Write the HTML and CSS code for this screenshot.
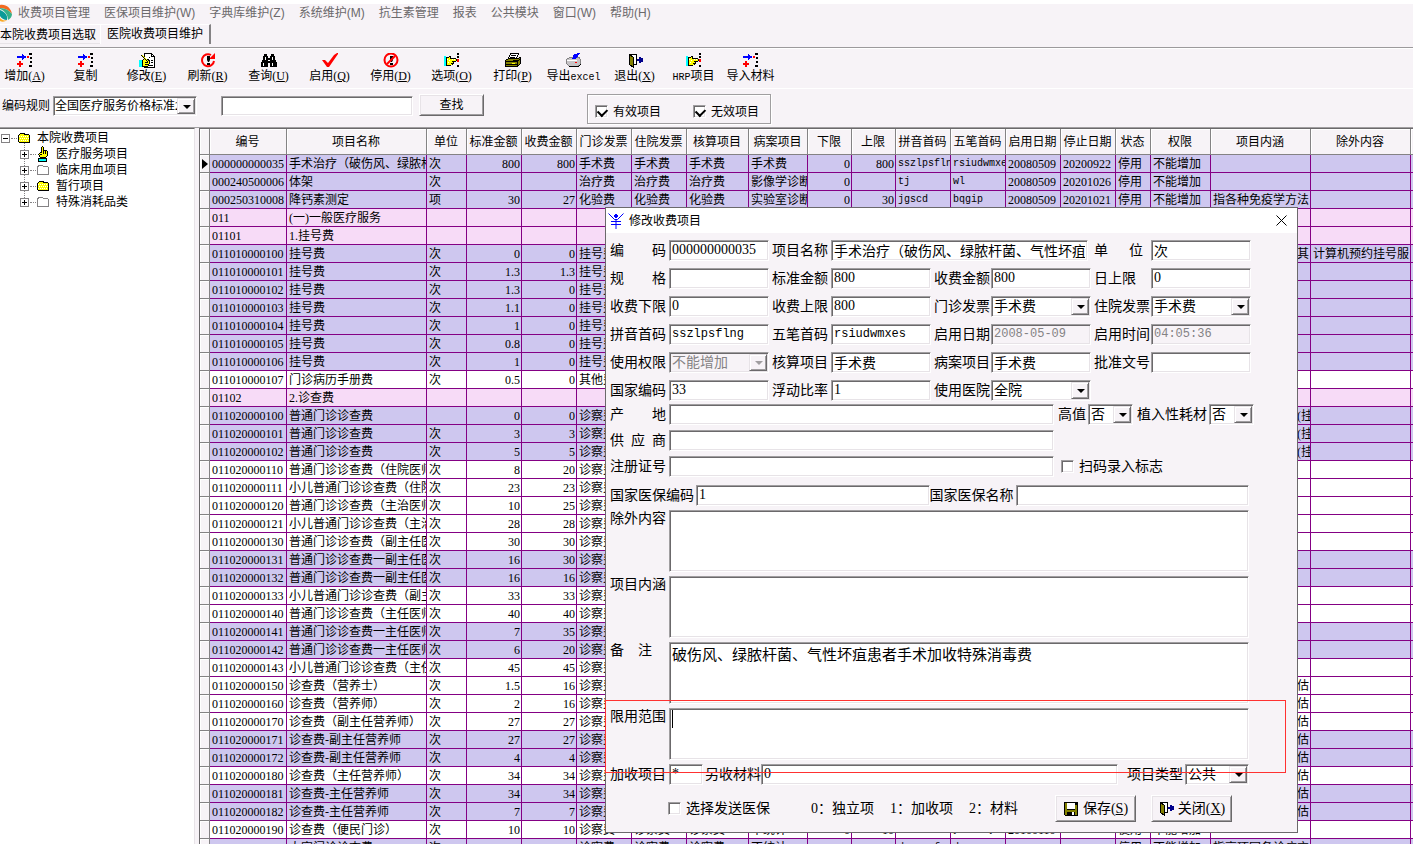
FILE: index.html
```html
<!DOCTYPE html>
<html lang="zh-CN">
<head>
    <meta charset="UTF-8">
    <meta name="viewport" content="width=device-width, initial-scale=1.0">
    <title>收费项目管理</title>
    <link rel="stylesheet" href="styles.css">
</head>
<body>
    <!-- shared icons -->
    <svg class="icon-defs" aria-hidden="true">
        <symbol id="i-add" viewBox="0 0 16 16">
            <path fill="#00f" d="M0 3h5V1h1v1h1v1h2v2H7v1H6v1H5V5H0z"/>
            <path fill="#f00" d="M2 8h2v2h2v2H4v2H2v-2H0v-2h2zM10 3h2v2h-2z"/>
            <path d="M12 0h3v2h-3zM13 4h2v2h-2zM13 8h2v2h-2zM12 12h3v2h-3z"/>
        </symbol>
        <symbol id="i-edit" viewBox="0 0 16 16">
            <path fill="#fff" stroke="#000" d="M5.500.500h7l3 3v11h-10z"/>
            <path fill="none" stroke="#000" d="M12.500.500v3h3M12 7.500h2M12 9.500h2M9 12.500h5M10 4.500h1"/>
            <path fill="#ff0" stroke="#000" d="M3.500 7.500l2-2 3 1 2 1v3l-2 3h-5z"/>
            <path stroke="#000" d="M2 2l7 7M6 9.500h3M6 11.500h3"/>
            <path stroke="#ff0" d="M3 2l5 5"/>
            <path fill="#0ff" d="M0 7h3v7H0z"/>
        </symbol>
        <symbol id="i-refresh" viewBox="0 0 16 16">
            <path fill="none" stroke="#f00" stroke-width="2" d="M11 2A6 6 0 1 0 14 8"/>
            <path fill="#f00" d="M15 0v6H9z"/>
            <path d="M7 3h3v4L9 9H8L7 7zM7 10h3v2H7z"/>
        </symbol>
        <symbol id="i-find" viewBox="0 0 16 16">
            <path d="M3 1h3v2h1v2h2V3h1V1h3v2h1v3l2 4v4H9v-4H7v4H0v-4l2-4V3h1z"/>
            <path fill="#fff" d="M4 4h1v3H4zM11 4h1v3h-1zM2 10h1v3H2zM11 10h1v3h-1zM7 7h2v1H7z"/>
        </symbol>
        <symbol id="i-check" viewBox="0 0 16 16">
            <path fill="#f00" d="M0 7h3l3 3 6-8 3-2h1v1l-9 13H5z"/>
        </symbol>
        <symbol id="i-stop" viewBox="0 0 16 16">
            <path d="M7 3h3v4L9 9H8L7 7zM7 10h3v2H7z"/>
            <circle cx="8" cy="7" r="6.500" fill="none" stroke="#f00" stroke-width="2"/>
            <path stroke="#f00" stroke-width="2" d="M12 3l-8 8"/>
        </symbol>
        <symbol id="i-hand" viewBox="0 0 16 16">
            <path fill="#0ff" d="M0 3h2v10H0z"/>
            <path d="M2 4h3V3h2v2h5v1h1v2h-1v1h-2v2H9v1H7v1H2z"/>
            <path fill="#ff0" d="M3 5h2V4h1v2h6v2H8v1h1v1H7v1h1v1H3z"/>
            <path fill="#fff" d="M3 6h1v1H3zM5 7h1v1H5zM4 9h1v1H4zM8 6h1v1H8zM10 6h1v1h-1z"/>
            <path d="M13 0h2v2h-2zM13 3h2v2h-2zM13 12h2v2h-2z"/>
            <path fill="#f00" d="M13 6h2v3h-2z"/>
        </symbol>
        <symbol id="i-print" viewBox="0 0 16 16">
            <path fill="#fff" stroke="#000" d="M5.500.500h8l-2 5h-8z"/>
            <path stroke="#000" d="M6 2.500h5M5 4.500h5"/>
            <path fill="#848200" stroke="#000" d="M.500 7.500l3-2h9l3-1v6l-3 3h-12z"/>
            <path stroke="#000" d="M1 8.500h11l3-2M1 11.500h11M12.500 8v5"/>
            <path stroke="#ff0" d="M7 10.500h3"/>
        </symbol>
        <symbol id="i-export" viewBox="0 0 16 16">
            <path fill="#c6c3c6" stroke="#848284" d="M.500 6.500l3-2h10l1 3v4l-3 2h-8l-3-3z"/>
            <path fill="none" stroke="#000" d="M3 13.500h9l3-2"/>
            <path fill="#00f" d="M8 1l6-1-4 6H6z"/>
            <path stroke="#fff" d="M1 7.500h10"/>
            <path stroke="#f00" d="M9 9.500h2"/>
        </symbol>
        <symbol id="i-exit" viewBox="0 0 16 16">
            <path fill="#fff" stroke="#000" d="M2.500 1.500h7v10h-7z"/>
            <path fill="#848200" stroke="#000" d="M2.500 1.500l4 3v10l-4-3z"/>
            <path fill="#00008b" d="M10 6h2V4h2v1h2v4h-2v1h-2V8h-2z"/>
        </symbol>
        <symbol id="i-save" viewBox="0 0 16 16">
            <path d="M1 1h14v14H2l-1-1z"/>
            <path fill="#848200" d="M2 2h2v7h8V4h2v10h-2v-3H4v3H2z"/>
            <path fill="#fff" d="M4 2h8v6H4zM9 11h2v3H9z"/>
        </symbol>
        <symbol id="i-folder" viewBox="0 0 12 12">
            <path d="M2 1h4l1 1h4v1h1v8H1v-1H0V3h1z"/>
            <path fill="#ff0" d="M2 2h4v1h5v7H1V3h1z"/>
            <path stroke="#fff" stroke-dasharray="1 1" d="M1 4.500h10M2 6.500h9M1 8.500h10"/>
        </symbol>
        <symbol id="i-folder-off" viewBox="0 0 12 12">
            <path fill="#fff" stroke="#848284" d="M.500 3.500l1-2h4l1 1h4l1 1v7H.500z"/>
        </symbol>
        <symbol id="i-point" viewBox="0 0 12 16">
            <path fill="#ff0" stroke="#000" d="M4.500 6.500v-5l1-1 1 1v3h3l1 1v4l-2 2h-5l-2-3 2-2z"/>
            <path stroke="#000" d="M6.500 4v4M8.500 5v3M3 8.500h2"/>
            <path fill="#0ff" stroke="#000" d="M1.500 12.500h8v3h-8z"/>
        </symbol>
    </svg>

    <nav class="menubar">
        <svg class="logo" viewBox="0 0 12 18" aria-hidden="true">
            <path fill="#f26a21" d="M0 1c6-1 11 3 12 9C9 6 5 4 0 4z"/>
            <path fill="#35b08a" d="M0 4c5 0 9 2 12 6 0 3-2 5-4 6 0-5-3-9-8-11z"/>
            <path fill="#0c9a98" d="M0 6c5 2 8 5 7 10-3 0-6-2-7-4z"/>
            <path fill="#f9a825" d="M0 14c2 2 4 3 7 2-2 2-5 2-7 1z"/>
        </svg>
        <a href="#">收费项目管理</a>
        <a href="#">医保项目维护(W)</a>
        <a href="#">字典库维护(Z)</a>
        <a href="#">系统维护(M)</a>
        <a href="#">抗生素管理</a>
        <a href="#">报表</a>
        <a href="#">公共模块</a>
        <a href="#">窗口(W)</a>
        <a href="#">帮助(H)</a>
    </nav>

    <div class="tabs">
        <button class="tab">本院收费项目选取</button>
        <button class="tab active">医院收费项目维护</button>
    </div>

    <div class="toolbar">
        <button class="tool"><svg><use href="#i-add"/></svg><span>增加(<u>A</u>)</span></button>
        <button class="tool"><svg><use href="#i-add"/></svg><span>复制</span></button>
        <button class="tool"><svg><use href="#i-edit"/></svg><span>修改(<u>E</u>)</span></button>
        <button class="tool"><svg class="smooth"><use href="#i-refresh"/></svg><span>刷新(<u>R</u>)</span></button>
        <button class="tool"><svg><use href="#i-find"/></svg><span>查询(<u>U</u>)</span></button>
        <button class="tool"><svg class="smooth"><use href="#i-check"/></svg><span>启用(<u>Q</u>)</span></button>
        <button class="tool"><svg class="smooth"><use href="#i-stop"/></svg><span>停用(<u>D</u>)</span></button>
        <button class="tool"><svg><use href="#i-hand"/></svg><span>选项(<u>O</u>)</span></button>
        <button class="tool"><svg><use href="#i-print"/></svg><span>打印(<u>P</u>)</span></button>
        <button class="tool"><svg><use href="#i-export"/></svg><span>导出<span class="mono">excel</span></span></button>
        <button class="tool"><svg><use href="#i-exit"/></svg><span>退出(<u>X</u>)</span></button>
        <button class="tool narrow"><svg><use href="#i-hand"/></svg><span><span class="mono">HRP</span>项目</span></button>
        <button class="tool narrow"><svg><use href="#i-add"/></svg><span>导入材料</span></button>
    </div>

    <div class="filter">
        <label for="rule">编码规则</label>
        <span class="select rule"><select id="rule"><option>全国医疗服务价格标准2012</option></select></span>
        <input class="keyword" type="text" aria-label="查找内容">
        <button class="btn find">查找</button>
        <div class="group">
            <label class="tick"><input type="checkbox" checked>有效项目</label>
            <label class="tick"><input type="checkbox" checked>无效项目</label>
        </div>
    </div>

    <div class="workspace">
        <ul class="tree">
            <li><span class="node root"><i class="box minus"></i><svg><use href="#i-folder"/></svg>本院收费项目</span>
                <ul>
                    <li class="node"><i class="box"></i><svg><use href="#i-point"/></svg>医疗服务项目</li>
                    <li class="node"><i class="box"></i><svg><use href="#i-folder-off"/></svg>临床用血项目</li>
                    <li class="node"><i class="box"></i><svg><use href="#i-folder"/></svg>暂行项目</li>
                    <li class="node"><i class="box"></i><svg><use href="#i-folder-off"/></svg>特殊消耗品类</li>
                </ul>
            </li>
        </ul>
        <div class="grid-wrap">
            <table class="grid">
                <colgroup>
                    <col class="w-mark"><col class="w-code"><col class="w-name"><col class="w-unit">
                    <col class="w-std"><col class="w-std"><col class="w-std"><col class="w-std">
                    <col class="w-calc"><col class="w-case"><col class="w-limit"><col class="w-limit">
                    <col class="w-std"><col class="w-std"><col class="w-std"><col class="w-std">
                    <col class="w-state"><col class="w-auth"><col class="w-long"><col class="w-long"><col class="w-long">
                </colgroup>
                <thead>
                    <tr>
                        <th></th><th>编号</th><th>项目名称</th><th>单位</th><th>标准金额</th><th>收费金额</th>
                        <th>门诊发票</th><th>住院发票</th><th>核算项目</th><th>病案项目</th><th>下限</th><th>上限</th>
                        <th>拼音首码</th><th>五笔首码</th><th>启用日期</th><th>停止日期</th><th>状态</th><th>权限</th>
                        <th>项目内涵</th><th>除外内容</th><th></th>
                    </tr>
                </thead>
                <tbody id="rows"></tbody>
            </table>
        </div>
    </div>

    <section class="dialog" role="dialog" aria-labelledby="dialog-title">
        <header class="titlebar">
            <svg viewBox="0 0 16 16" aria-hidden="true"><path fill="none" stroke="#00f" d="M.500.500l6 6h3l6-6M8 6v10M3 8.500h10M3 11.500h10"/><path fill="#00f" d="M7 1h2v1h1v2H9v1H7V4H6V2h1z"/></svg>
            <h1 id="dialog-title">修改收费项目</h1>
            <button class="close" aria-label="关闭窗口"><svg viewBox="0 0 11 11"><path stroke="#000" d="M.500.500l10 10M10.500.500l-10 10"/></svg></button>
        </header>
        <form class="form">
            <div class="fields">
                <label class="lead spread" for="f-code">编 码</label><input id="f-code" type="text" value="000000000035">
                <label for="f-name">项目名称</label><input class="wide" id="f-name" type="text" value="手术治疗（破伤风、绿脓杆菌、气性坏疽">
                <label class="spread unit" for="f-unit">单 位</label><input id="f-unit" type="text" value="次">

                <label class="lead spread" for="f-spec">规 格</label><input id="f-spec" type="text">
                <label for="f-std">标准金额</label><input id="f-std" type="text" value="800">
                <label for="f-fee">收费金额</label><input id="f-fee" type="text" value="800">
                <label for="f-day">日上限</label><input id="f-day" type="text" value="0">

                <label class="lead" for="f-low">收费下限</label><input id="f-low" type="text" value="0">
                <label for="f-high">收费上限</label><input id="f-high" type="text" value="800">
                <label for="f-out">门诊发票</label><span class="select"><select id="f-out"><option>手术费</option></select></span>
                <label for="f-in">住院发票</label><span class="select"><select id="f-in"><option>手术费</option></select></span>

                <label class="lead" for="f-py">拼音首码</label><input class="mono" id="f-py" type="text" value="sszlpsflng">
                <label for="f-wb">五笔首码</label><input class="mono" id="f-wb" type="text" value="rsiudwmxes">
                <label for="f-date">启用日期</label><input class="mono" id="f-date" type="text" value="2008-05-09" disabled>
                <label for="f-time">启用时间</label><input class="mono" id="f-time" type="text" value="04:05:36" disabled>

                <label class="lead" for="f-auth">使用权限</label><span class="select"><select id="f-auth" disabled><option>不能增加</option></select></span>
                <label for="f-calc">核算项目</label><input id="f-calc" type="text" value="手术费">
                <label for="f-case">病案项目</label><input id="f-case" type="text" value="手术费">
                <label for="f-doc">批准文号</label><input id="f-doc" type="text">

                <label class="lead" for="f-nat">国家编码</label><input id="f-nat" type="text" value="33">
                <label for="f-rate">浮动比率</label><input id="f-rate" type="text" value="1">
                <label for="f-hosp">使用医院</label><span class="select"><select id="f-hosp"><option>全院</option></select></span>
            </div>

            <div class="line">
                <label class="first spread" for="f-origin">产 地</label><input class="long" id="f-origin" type="text">
                <label class="after" for="f-dear">高值</label><span class="select yesno"><select id="f-dear"><option>否</option></select></span>
                <label class="after" for="f-implant">植入性耗材</label><span class="select yesno"><select id="f-implant"><option>否</option></select></span>
            </div>
            <div class="line">
                <label class="first spread" for="f-supplier">供 应 商</label><input class="long" id="f-supplier" type="text">
            </div>
            <div class="line">
                <label class="first" for="f-reg">注册证号</label><input class="long" id="f-reg" type="text">
                <label class="tick scan"><input type="checkbox">扫码录入标志</label>
            </div>
            <div class="line insurance">
                <label for="f-icode">国家医保编码</label><input id="f-icode" type="text" value="1">
                <label for="f-iname">国家医保名称</label><input id="f-iname" type="text">
            </div>

            <div class="notes">
                <label for="f-except">除外内容</label><textarea id="f-except"></textarea>
                <label for="f-content">项目内涵</label><textarea id="f-content"></textarea>
                <label class="spread short" for="f-remark">备 注</label><textarea id="f-remark">破伤风、绿脓杆菌、气性坏疽患者手术加收特殊消毒费</textarea>
                <label for="f-scope">限用范围</label><textarea class="low" id="f-scope"></textarea>
            </div>

            <div class="line extra">
                <label class="first" for="f-plus">加收项目</label><input class="tiny" id="f-plus" type="text" value="*">
                <label for="f-mat">另收材料</label><input class="grow" id="f-mat" type="text" value="0">
                <label class="kind" for="f-kind">项目类型</label><span class="select public"><select id="f-kind"><option>公共</option></select></span>
            </div>

            <div class="actions">
                <label class="tick"><input type="checkbox">选择发送医保</label>
                <p class="hints"><span>0：独立项</span><span>1：加收项</span><span>2：材料</span></p>
                <button class="btn" type="button"><svg><use href="#i-save"/></svg>保存(<u>S</u>)</button>
                <button class="btn" type="button"><svg><use href="#i-exit"/></svg>关闭(<u>X</u>)</button>
            </div>
        </form>
        <div class="marker"><i class="caret"></i></div>
    </section>

    <script src="script.js"></script>
</body>
</html>
```

FILE: styles.css
```css
* {
    box-sizing: border-box;
}

html, body {
    height: 100%;
    margin: 0;
}

body {
    display: flex;
    flex-direction: column;
    position: relative;
    overflow: hidden;
    border-top: 4px solid #fff;
    background-color: #f7f3f7;
    color: #000;
    font-family: "Liberation Serif", "Noto Sans CJK SC", sans-serif;
    font-size: 12px;
    line-height: 16px;
}

button, input, select, textarea {
    margin: 0;
    padding: 0;
    border: 0;
    outline: none;
    border-radius: 0;
    color: inherit;
    font: inherit;
}

svg {
    display: block;
    flex: none;
    shape-rendering: crispEdges;
}

svg.smooth {
    shape-rendering: auto;
}

.icon-defs {
    position: absolute;
    width: 0;
    height: 0;
}

.mono {
    font-family: "Liberation Mono", "Noto Sans CJK SC", monospace;
    font-size: 10px;
}

/* menu and tabs */
.menubar {
    display: flex;
    align-items: center;
    gap: 14px;
    height: 18px;
    font-family: "Liberation Sans", "Noto Sans CJK SC", sans-serif;
}

.menubar a {
    color: #6b696b;
    text-decoration: none;
    white-space: nowrap;
}

.logo {
    width: 12px;
    height: 18px;
    margin-right: -8px;
    shape-rendering: auto;
}

.tabs {
    display: flex;
    height: 26px;
    align-items: flex-start;
    border-bottom: 1px solid #9c9a9c;
    padding-top: 2px;
}

.tab {
    height: 20px;
    padding: 2px 4px 0 0;
    background-color: #f7f3f7;
    border-top: 1px solid #fff;
    border-bottom: 1px solid #e7e3e7;
    line-height: 16px;
}

.tab.active {
    padding: 0 6px 2px 6px;
    border-left: 1px solid #fff;
    border-right: 2px solid #848284;
    border-bottom: 0;
}

/* toolbar */
.toolbar {
    display: flex;
    height: 41px;
    margin-left: -6px;
    border-top: 1px solid #fff;
    border-bottom: 1px solid #fff;
}

.tool {
    display: flex;
    flex-direction: column;
    align-items: center;
    justify-content: flex-start;
    width: 61px;
    padding-top: 4px;
    background: none;
    white-space: nowrap;
}

.tool.narrow {
    width: 57px;
}

.tool svg {
    width: 16px;
    height: 16px;
}

.tool > span {
    line-height: 14px;
}

/* sunken boxes */
input[type="text"], textarea, .select {
    height: 21px;
    padding: 0 2px 1px;
    background-color: #fff;
    border: 1px solid;
    border-color: #a09ea0 #fff #fff #a09ea0;
    box-shadow: inset 1px 1px 0 #6b696b, inset -1px -1px 0 #e7e3e7;
}

input[type="text"]:disabled {
    background-color: #f7f3f7;
    color: #848284;
}

.select {
    display: inline-block;
    position: relative;
    padding-bottom: 0;
}

.select select {
    appearance: none;
    display: block;
    width: 100%;
    height: 100%;
    padding-right: 16px;
    background: transparent;
    overflow: hidden;
}

.select select:disabled {
    color: #848284;
    opacity: 1;
}

.select:has(select:disabled) {
    background-color: #f7f3f7;
}

.select::before {
    content: "";
    position: absolute;
    top: 1px;
    right: 1px;
    bottom: 1px;
    width: 16px;
    background-color: #f7f3f7;
    border: 1px solid;
    border-color: #e7e3e7 #6b696b #6b696b #e7e3e7;
    box-shadow: inset 1px 1px 0 #fff, inset -1px -1px 0 #a09ea0;
    pointer-events: none;
}

.select::after {
    content: "";
    position: absolute;
    top: 8px;
    right: 5px;
    border: 4px solid transparent;
    border-top-color: #000;
    border-bottom: 0;
    pointer-events: none;
}

.select:has(select:disabled)::after {
    border-top-color: #a09ea0;
}

input[type="checkbox"] {
    appearance: none;
    position: relative;
    flex: none;
    width: 13px;
    height: 13px;
    background-color: #fff;
    border: 1px solid;
    border-color: #a09ea0 #fff #fff #a09ea0;
    box-shadow: inset 1px 1px 0 #6b696b, inset -1px -1px 0 #e7e3e7;
}

input[type="checkbox"]:checked::after {
    content: "";
    position: absolute;
    left: 3px;
    top: 1px;
    width: 5px;
    height: 7px;
    border: solid #000;
    border-width: 0 2px 2px 0;
    transform: rotate(45deg);
}

.tick {
    display: flex;
    align-items: center;
    gap: 5px;
    white-space: nowrap;
}

.btn {
    display: flex;
    align-items: center;
    justify-content: center;
    background-color: #f7f3f7;
    border: 1px solid;
    border-color: #fff #6b696b #6b696b #fff;
    box-shadow: inset 1px 1px 0 #e7e3e7, inset -1px -1px 0 #a09ea0;
}

/* filter bar */
.filter {
    display: flex;
    align-items: flex-start;
    height: 38px;
    padding: 5px 0 0 2px;
}

.filter > label {
    width: 51px;
    padding-top: 4px;
}

.filter .rule {
    width: 144px;
    height: 20px;
    margin-top: 2px;
    padding-left: 1px;
}

.filter .keyword {
    width: 192px;
    height: 20px;
    margin: 2px 6px 0 24px;
}

.filter .find {
    width: 65px;
    height: 22px;
}

.group {
    display: flex;
    gap: 32px;
    height: 30px;
    margin-left: 103px;
    padding: 5px 11px 0 7px;
    border: 1px solid #a09ea0;
    box-shadow: 1px 1px 0 #fff, inset 1px 1px 0 #fff;
}

/* tree */
.workspace {
    display: flex;
    flex: 1;
    min-height: 0;
    border-top: 1px solid #a09ea0;
}

.tree {
    width: 195px;
    flex: none;
    margin: 0 4px 0 0;
    padding: 1px 0 0;
    background-color: #fff;
    border-top: 1px solid #6b696b;
    border-right: 1px solid #e7e3e7;
    list-style: none;
}

.tree ul {
    margin: 0;
    padding: 0 0 0 19px;
    list-style: none;
}

.node {
    display: flex;
    align-items: center;
    height: 16px;
    padding-left: 1px;
    white-space: nowrap;
}

.node svg {
    width: 12px;
    height: 12px;
    margin-right: 7px;
}

.node svg:has(use[href="#i-point"]) {
    height: 16px;
}

.box {
    position: relative;
    width: 9px;
    height: 9px;
    margin-right: 8px;
    border: 1px solid #848284;
    background: linear-gradient(#000, #000) 50% 50% / 5px 1px no-repeat, linear-gradient(#000, #000) 50% 50% / 1px 5px no-repeat;
}

.box.minus {
    background: linear-gradient(#000, #000) 50% 50% / 5px 1px no-repeat;
}

.box::before {
    content: "";
    position: absolute;
    left: 9px;
    top: 3px;
    width: 6px;
    border-top: 1px dotted #848284;
}

.tree ul .box::after {
    content: "";
    position: absolute;
    left: 3px;
    top: -8px;
    height: 7px;
    border-left: 1px dotted #848284;
}

/* data grid */
.grid-wrap {
    flex: 1;
    min-width: 0;
    overflow: hidden;
    background-color: #fff;
    border-top: 1px solid #6b696b;
    border-left: 1px solid #6b696b;
}

.grid {
    width: 1311px;
    table-layout: fixed;
    border-collapse: separate;
    border-spacing: 0;
}

.w-mark { width: 10px; }
.w-code { width: 77px; }
.w-name { width: 140px; }
.w-unit { width: 40px; }
.w-std { width: 55px; }
.w-calc { width: 62px; }
.w-case { width: 59px; }
.w-limit { width: 44px; }
.w-state { width: 35px; }
.w-auth { width: 60px; }
.w-long { width: 100px; }

.grid th, .grid td {
    padding: 1px 1px 0 2px;
    overflow: hidden;
    white-space: nowrap;
    border-right: 1px solid #840084;
    border-bottom: 1px solid #840084;
}

.grid td {
    height: 18px;
    line-height: 16px;
}

.grid th {
    height: 26px;
    padding-right: 3px;
    background-color: #f7f3f7;
    border-color: #848284;
    box-shadow: inset 1px 1px 0 #fff;
    font-weight: normal;
}

.grid td.mark {
    padding: 0;
    background-color: #f7f3f7;
    border-color: #848284;
    box-shadow: inset 1px 1px 0 #fff;
}

.grid .current .mark::before {
    content: "";
    display: block;
    margin-left: 2px;
    width: 0;
    border: 5px solid transparent;
    border-left: 6px solid #000;
    border-right: 0;
}

.grid .off td:not(.mark) {
    background-color: #cec7ef;
}

.grid .head td:not(.mark) {
    background-color: #f7dbf7;
}

.grid .num {
    text-align: right;
}

.grid .tail {
    padding-left: 86px;
}

/* edit window */
.dialog {
    position: absolute;
    left: 605px;
    top: 203px;
    width: 693px;
    background-color: #f7f3f7;
    border: 1px solid #6b696b;
    font-size: 14px;
}

.titlebar {
    display: flex;
    align-items: center;
    height: 25px;
    padding: 0 10px 0 2px;
    background-color: #fff;
}

.titlebar > svg {
    width: 16px;
    height: 16px;
    shape-rendering: auto;
}

.titlebar h1 {
    flex: 1;
    margin: 0 0 0 5px;
    font-size: 12px;
    font-weight: normal;
    line-height: 16px;
}

.close {
    background: none;
}

.close svg {
    width: 11px;
    height: 11px;
    shape-rendering: auto;
}

.form {
    padding: 7px 48px 10px 4px;
}

.form label {
    white-space: nowrap;
}

.form .mono {
    font-size: 12px;
}

.fields {
    display: grid;
    grid-template-columns: 59px 100px 62px 100px 60px 100px 60px 100px;
    row-gap: 7px;
    align-items: center;
}

.fields input, .fields .select {
    width: 100%;
    min-width: 0;
}

.fields label {
    padding-left: 3px;
}

.fields .lead {
    padding-left: 0;
}

.fields .wide {
    grid-column: span 3;
    width: 257px;
}

.spread {
    width: 56px;
    text-align-last: justify;
}

.spread.short {
    width: 42px;
}

.spread.unit {
    width: 52px;
}

.line {
    display: flex;
    align-items: center;
    margin-top: 5px;
}

.fields + .line {
    margin-top: 3px;
}

.line .first {
    flex: none;
    width: 56px;
    margin-right: 3px;
}

.line .long {
    flex: none;
    width: 385px;
}

.line .after {
    margin: 0 2px 0 4px;
}

.yesno {
    flex: none;
    width: 45px;
}

.tick.scan {
    margin-left: 7px;
}

.insurance {
    margin-top: 8px;
}

.insurance label {
    flex: none;
    width: 86px;
}

.insurance input {
    flex: 1;
    min-width: 0;
}

.notes {
    display: grid;
    grid-template-columns: 59px 1fr;
    row-gap: 4px;
    margin-top: 4px;
}

.notes label {
    padding-top: 1px;
}

.notes textarea {
    display: block;
    width: 100%;
    height: 62px;
    padding: 4px 2px;
    font-size: 15px;
    resize: none;
}

.notes .low {
    height: 52px;
}

.extra {
    margin-top: 4px;
}

.extra .tiny {
    width: 34px;
    margin-right: 2px;
}

.extra .grow {
    flex: 1;
    min-width: 0;
    margin-right: 9px;
}

.extra .kind {
    margin-right: 2px;
}

.extra .public {
    width: 64px;
}

.actions {
    display: flex;
    align-items: center;
    gap: 15px;
    margin-top: 10px;
    padding: 0 17px 0 58px;
}

.actions .hints {
    display: flex;
    flex: 1;
    gap: 16px;
    margin: 0 0 0 26px;
    white-space: nowrap;
}

.actions .btn {
    width: 81px;
    height: 27px;
}

.actions .btn svg {
    width: 16px;
    height: 16px;
    margin-right: 4px;
}

/* red frame round the scope field */
.marker {
    position: absolute;
    left: -1px;
    top: 492px;
    width: 681px;
    height: 73px;
    border: 1px solid #ff3131;
    pointer-events: none;
}

.caret {
    position: absolute;
    left: 66px;
    top: 9px;
    width: 1px;
    height: 18px;
    background-color: #000;
}
```

FILE: script.js
```js
// kind: off = disabled item, head = category, on = item in use
const rows = [
    ["off", "000000000035", "手术治疗（破伤风、绿脓杆菌", "次", "800", "800", "手术费", "手术费", "手术费", "手术费", "0", "800", "sszlpsflng", "rsiudwmxes", "20080509", "20200922", "停用", "不能增加"],
    ["off", "000240500006", "体架", "次", "", "", "治疗费", "治疗费", "治疗费", "影像学诊断", "0", "", "tj", "wl", "20080509", "20201026", "停用", "不能增加"],
    ["off", "000250310008", "降钙素测定", "项", "30", "27", "化验费", "化验费", "化验费", "实验室诊断", "0", "30", "jgscd", "bqgip", "20080509", "20201021", "停用", "不能增加", "指各种免疫学方法"],
    ["head", "011", "(一)一般医疗服务"],
    ["head", "01101", "1.挂号费"],
    ["off", "011010000100", "挂号费", "次", "0", "0", "挂号费", "", "", "", "", "", "", "", "", "", "", "", "其", "计算机预约挂号服"],
    ["off", "011010000101", "挂号费", "次", "1.3", "1.3", "挂号费"],
    ["off", "011010000102", "挂号费", "次", "1.3", "0", "挂号费"],
    ["off", "011010000103", "挂号费", "次", "1.1", "0", "挂号费"],
    ["off", "011010000104", "挂号费", "次", "1", "0", "挂号费"],
    ["off", "011010000105", "挂号费", "次", "0.8", "0", "挂号费"],
    ["off", "011010000106", "挂号费", "次", "1", "0", "挂号费"],
    ["on", "011010000107", "门诊病历手册费", "次", "0.5", "0", "其他费"],
    ["head", "01102", "2.诊查费"],
    ["off", "011020000100", "普通门诊诊查费", "", "0", "0", "诊察费", "", "", "", "", "", "", "", "", "", "", "", "(挂"],
    ["off", "011020000101", "普通门诊诊查费", "次", "3", "3", "诊察费", "", "", "", "", "", "", "", "", "", "", "", "(挂"],
    ["off", "011020000102", "普通门诊诊查费", "次", "5", "5", "诊察费", "", "", "", "", "", "", "", "", "", "", "", "(挂"],
    ["on", "011020000110", "普通门诊诊查费（住院医师", "次", "8", "20", "诊察费"],
    ["on", "011020000111", "小儿普通门诊诊查费（住院", "次", "23", "23", "诊察费"],
    ["on", "011020000120", "普通门诊诊查费（主治医师", "次", "10", "25", "诊察费"],
    ["on", "011020000121", "小儿普通门诊诊查费（主治", "次", "28", "28", "诊察费"],
    ["on", "011020000130", "普通门诊诊查费（副主任医", "次", "30", "30", "诊察费"],
    ["off", "011020000131", "普通门诊诊查费一副主任医", "次", "16", "30", "诊察费"],
    ["off", "011020000132", "普通门诊诊查费一副主任医", "次", "16", "16", "诊察费"],
    ["on", "011020000133", "小儿普通门诊诊查费（副主", "次", "33", "33", "诊察费"],
    ["on", "011020000140", "普通门诊诊查费（主任医师", "次", "40", "40", "诊察费"],
    ["off", "011020000141", "普通门诊诊查费一主任医师", "次", "7", "35", "诊察费"],
    ["off", "011020000142", "普通门诊诊查费一主任医师", "次", "6", "20", "诊察费"],
    ["on", "011020000143", "小儿普通门诊诊查费（主任", "次", "45", "45", "诊察费"],
    ["on", "011020000150", "诊查费（营养士）", "次", "1.5", "16", "诊察费", "", "", "", "", "", "", "", "", "", "", "", "估"],
    ["on", "011020000160", "诊查费（营养师）", "次", "2", "16", "诊察费", "", "", "", "", "", "", "", "", "", "", "", "估"],
    ["on", "011020000170", "诊查费（副主任营养师）", "次", "27", "27", "诊察费", "", "", "", "", "", "", "", "", "", "", "", "估"],
    ["off", "011020000171", "诊查费-副主任营养师", "次", "27", "27", "诊察费", "", "", "", "", "", "", "", "", "", "", "", "估"],
    ["off", "011020000172", "诊查费-副主任营养师", "次", "4", "4", "诊察费", "", "", "", "", "", "", "", "", "", "", "", "估"],
    ["on", "011020000180", "诊查费（主任营养师）", "次", "34", "34", "诊察费", "", "", "", "", "", "", "", "", "", "", "", "估"],
    ["off", "011020000181", "诊查费-主任营养师", "次", "34", "34", "诊察费", "", "", "", "", "", "", "", "", "", "", "", "估"],
    ["off", "011020000182", "诊查费-主任营养师", "次", "7", "7", "诊察费", "", "", "", "", "", "", "", "", "", "", "", "估"],
    ["on", "011020000190", "诊查费（便民门诊）", "次", "10", "10", "诊察费", "诊察费", "诊察费", "不统计", "0", "10", "zcfbmmz", "yxnwnxy", "20100110", "", "使用", "不能增加"],
    ["off", "011020000200", "大容门诊诊查费", "次", "7", "7", "诊察费", "诊察费", "诊察费", "不统计", "0", "7", "drmzzcf", "dpuyysx", "20080509", "20201021", "停用", "不能增加", "指高项国各诊疗方"]
];

const numeric = [4, 5, 10, 11];
const codes = [12, 13];
const columns = 20;
const body = document.getElementById("rows");

rows.forEach((row, index) => {
    const tr = document.createElement("tr");
    tr.className = row[0];
    if (index === 0) {
        tr.classList.add("current");
    }
    const mark = document.createElement("td");
    mark.className = "mark";
    tr.appendChild(mark);

    for (let i = 1; i <= columns; i++) {
        const td = document.createElement("td");
        const text = row[i] || "";
        td.textContent = text;
        if (numeric.includes(i)) td.className = "num";
        if (codes.includes(i)) td.className = "mono";
        if (i === 18 && text.length > 0 && text.length < 3) td.className = "tail";
        tr.appendChild(td);
    }
    body.appendChild(tr);
});
```
